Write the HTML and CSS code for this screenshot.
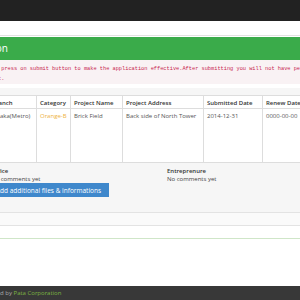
FILE: index.html
```html
<!DOCTYPE html>
<html lang="en">
<head>
    <meta charset="UTF-8">
    <title>Application</title>
    <link rel="stylesheet" href="styles.css">
</head>
<body>
    <div class="topbar"></div>

    <div class="page">
        <div class="panel">
            <div class="panel-title">Submit Application</div>
            <div class="notice-code">Please press on submit button to make the application effective.After submitting you will not have permission<br>to edit.</div>

            <div class="panel-body">
                <table class="info">
                    <colgroup>
                        <col style="width:48px">
                        <col style="width:34px">
                        <col style="width:52px">
                        <col style="width:81px">
                        <col style="width:59px">
                        <col style="width:68px">
                    </colgroup>
                    <tr>
                        <th>Branch</th>
                        <th>Category</th>
                        <th>Project Name</th>
                        <th>Project Address</th>
                        <th>Submitted Date</th>
                        <th>Renew Date</th>
                    </tr>
                    <tr class="data-row">
                        <td>Dhaka(Metro)</td>
                        <td class="category">Orange-B</td>
                        <td>Brick Field</td>
                        <td>Back side of North Tower</td>
                        <td>2014-12-31</td>
                        <td>0000-00-00</td>
                    </tr>
                </table>

                <div class="comments">
                    <div>
                        <b>Office</b>
                        <p>No comments yet</p>
                    </div>
                    <div>
                        <b>Entreprenure</b>
                        <p>No comments yet</p>
                    </div>
                </div>

                <button class="btn-add">Add additional files &amp; informations</button>
            </div>
            <div class="panel-footer"></div>
        </div>
        <div class="panel-green"></div>
    </div>

    <footer class="footer">Powered by <span>Pata Corporation</span></footer>
</body>
</html>
```

FILE: styles.css
```css
body {
    margin: 0;
    height: 300px;
    overflow: hidden;
    display: flex;
    flex-direction: column;
    font-family: 'Open Sans', sans-serif;
    background-color: #fff;
}
.topbar {
    height: 21px;
    flex-shrink: 0;
    background-color: #222;
}
.page {
    width: 360px;
    margin: 14px 0 0 -12px;
}
.panel {
    border-top: 1px solid #e2e2e2;
    padding-top: 1px;
}
.panel-title {
    height: 23px;
    line-height: 23px;
    background-color: #3aab4a;
    color: #fff;
    font-size: 10px;
    text-indent: -68px;
    white-space: nowrap;
}
.notice-code {
    margin-left: -9px;
    height: 20px;
    padding: 4px 0 0 0;
    background-color: #f9f2f4;
    color: #c7254e;
    font-family: 'Liberation Mono', monospace;
    font-size: 5.3px;
    line-height: 10px;
    white-space: nowrap;
}
.panel-body {
    margin-top: 4px;
    padding: 7px 0 15px;
    background-color: #f6f6f6;
}
.info {
    border-collapse: collapse;
    table-layout: fixed;
    width: 342px;
    background-color: #fff;
    font-size: 6px;
    line-height: 8px;
}
.info th,
.info td {
    border: 1px solid #ddd;
    text-align: left;
    white-space: nowrap;
    overflow: hidden;
}
.info th {
    padding: 3px 3px 1px;
    color: #333;
    font-weight: 600;
}
.info td {
    height: 50px;
    padding: 3px 3px 0;
    vertical-align: top;
    color: #555;
}
.info .category {
    color: #eeb23e;
}
.comments {
    display: grid;
    grid-template-columns: 176px 1fr;
    margin-top: 4px;
    padding-left: 3px;
    font-size: 6px;
    line-height: 8px;
    color: #444;
}
.comments b {
    font-weight: 600;
    color: #333;
}
.comments p {
    margin: 0;
}
.btn-add {
    display: block;
    height: 14px;
    padding: 0 8px;
    border: none;
    background-color: #3f88cc;
    color: #fff;
    font-family: 'Open Sans', sans-serif;
    font-size: 6.5px;
}
.panel-footer {
    height: 12px;
    border-top: 1px solid #e3e3e3;
    border-bottom: 1px solid #e3e3e3;
    background-color: #fafafa;
}
.panel-green {
    margin-top: 12px;
    border-top: 1px solid #cfe6c8;
}
.footer {
    margin-top: auto;
    height: 14px;
    flex-shrink: 0;
    background-color: #383838;
    color: #aaa;
    font-size: 6px;
    line-height: 14px;
    text-indent: -21px;
    white-space: nowrap;
}
.footer span {
    color: #7cb342;
}
```
